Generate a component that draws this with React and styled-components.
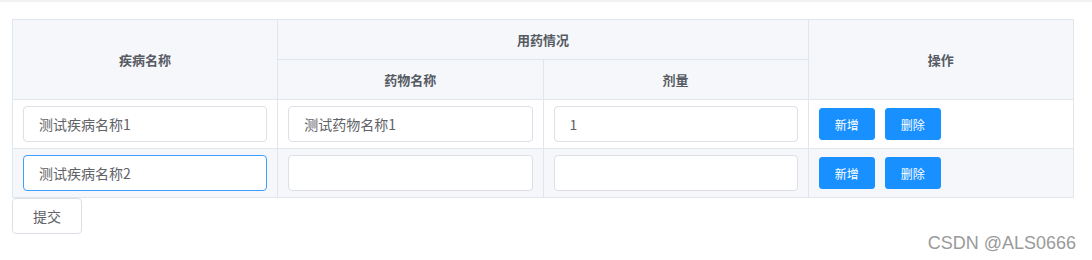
import React, { useState } from 'react';
import styled, { createGlobalStyle } from 'styled-components';

const GlobalStyle = createGlobalStyle`
    html, body {
        margin: 0;
        padding: 0;
        background: #fff;
        font-family: "Noto Sans CJK SC", "Liberation Sans", sans-serif;
    }
`;

const Page = styled.div`
    position: relative;
    width: 1092px;
    height: 260px;
    box-sizing: border-box;
    border-top: 2px solid #f2f2f2;
    padding: 17px 0 0 12px;
    overflow: hidden;
`;

const Table = styled.table`
    width: 1062px;
    border-collapse: collapse;
    table-layout: fixed;
    font-size: 13px;
`;

const HeadCell = styled.th`
    height: 39px;
    padding: 0;
    background: #f5f7fa;
    border: 1px solid #dfe6ec;
    color: #555a63;
    font-weight: 700;
    text-align: center;
    vertical-align: middle;
`;

const Row = styled.tr`
    background: ${p => (p.$striped ? '#f5f7fa' : '#fff')};
`;

const Cell = styled.td`
    height: 36px;
    padding: 6px 10px;
    border: 1px solid #dfe6ec;
    vertical-align: middle;
`;

const Input = styled.input`
    display: block;
    width: 100%;
    height: 36px;
    box-sizing: border-box;
    padding: 0 15px;
    border: 1px solid ${p => (p.$focused ? '#409eff' : '#dcdfe6')};
    border-radius: 4px;
    background: #fff;
    color: #606266;
    font-family: inherit;
    font-size: 14px;
    outline: none;
`;

const Actions = styled.div`
    display: flex;
    gap: 10px;
`;

const PrimaryButton = styled.button`
    height: 32px;
    padding: 0 15px;
    border: 1px solid #1890ff;
    border-radius: 3px;
    background: #1890ff;
    color: #fff;
    font-family: inherit;
    font-size: 12px;
    cursor: pointer;
`;

const SubmitButton = styled.button`
    display: block;
    height: 36px;
    width: 70px;
    border: 1px solid #dcdfe6;
    border-radius: 4px;
    background: #fff;
    color: #606266;
    font-family: inherit;
    font-size: 14px;
    cursor: pointer;
`;

const Watermark = styled.div`
    position: absolute;
    right: 16px;
    bottom: 6px;
    color: #9a9a9a;
    font-family: "Liberation Sans", sans-serif;
    font-size: 18px;
`;

const initialRows = [
    { id: 1, disease: '测试疾病名称1', drug: '测试药物名称1', dose: '1' },
    { id: 2, disease: '测试疾病名称2', drug: '', dose: '' },
];

export default function App() {
    const [rows, setRows] = useState(initialRows);

    const update = (id, key, value) => {
        setRows(rows.map(r => (r.id === id ? { ...r, [key]: value } : r)));
    };

    return (
        <Page>
            <GlobalStyle />
            <Table>
                <thead>
                    <tr>
                        <HeadCell rowSpan={2}>疾病名称</HeadCell>
                        <HeadCell colSpan={2}>用药情况</HeadCell>
                        <HeadCell rowSpan={2}>操作</HeadCell>
                    </tr>
                    <tr>
                        <HeadCell>药物名称</HeadCell>
                        <HeadCell>剂量</HeadCell>
                    </tr>
                </thead>
                <tbody>
                    {rows.map((row, i) => (
                        <Row key={row.id} $striped={i % 2 === 1}>
                            <Cell>
                                <Input
                                    value={row.disease}
                                    $focused={i === 1}
                                    onChange={e => update(row.id, 'disease', e.target.value)}
                                />
                            </Cell>
                            <Cell>
                                <Input value={row.drug} onChange={e => update(row.id, 'drug', e.target.value)} />
                            </Cell>
                            <Cell>
                                <Input value={row.dose} onChange={e => update(row.id, 'dose', e.target.value)} />
                            </Cell>
                            <Cell>
                                <Actions>
                                    <PrimaryButton>新增</PrimaryButton>
                                    <PrimaryButton>删除</PrimaryButton>
                                </Actions>
                            </Cell>
                        </Row>
                    ))}
                </tbody>
            </Table>
            <SubmitButton>提交</SubmitButton>
            <Watermark>CSDN @ALS0666</Watermark>
        </Page>
    );
}
